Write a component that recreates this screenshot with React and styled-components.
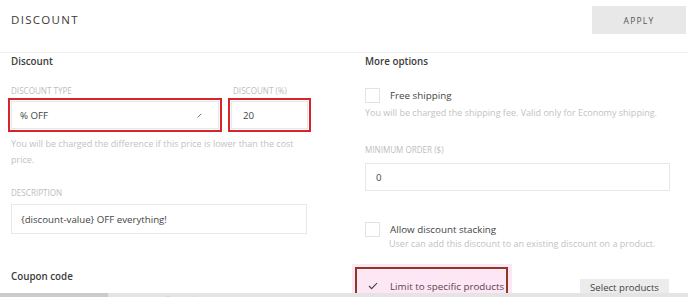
import styled, { createGlobalStyle } from "styled-components";

const Global = createGlobalStyle`
  html, body {
    margin: 0;
    padding: 0;
    background: #fff;
    font-family: "Open Sans", "Noto Sans", sans-serif;
    color: #333;
    overflow: hidden;
  }
`;

const Page = styled.div`
  width: 688px;
  height: 297px;
  overflow: hidden;
  position: relative;
`;

const Header = styled.div`
  display: flex;
  justify-content: space-between;
  align-items: flex-start;
  height: 53px;
  padding: 6px 2px 0 11px;
  box-sizing: border-box;
  border-bottom: 1px solid #f1f1f1;
`;

const Title = styled.h1`
  margin: 6px 0 0;
  font-size: 11.5px;
  font-weight: 400;
  letter-spacing: 1.3px;
  color: #3a3a3a;
  line-height: 16px;
`;

const ApplyButton = styled.button`
  width: 94px;
  height: 28px;
  border: none;
  background: #e8e8e8;
  font-family: inherit;
  font-size: 8.5px;
  letter-spacing: 1.2px;
  color: #555;
  padding: 0;
`;

const Body = styled.div`
  display: grid;
  grid-template-columns: 300px 305px;
  column-gap: 54px;
  padding-left: 11px;
`;

const Column = styled.div`
  display: flex;
  flex-direction: column;
`;

const SectionTitle = styled.h2`
  margin: ${(p) => p.$top || 0}px 0 0;
  font-size: 9.8px;
  font-weight: 600;
  line-height: 18px;
  color: #3c3c3c;
`;

const Label = styled.div`
  margin-top: ${(p) => p.$top || 0}px;
  padding-left: ${(p) => p.$indent || 0}px;
  font-size: 8.1px;
  line-height: 12px;
  color: #bdbdbd;
  text-transform: uppercase;
  white-space: nowrap;
`;

const FieldRow = styled.div`
  display: flex;
  gap: 6px;
  margin-left: -3px;
`;

const FieldGroup = styled.div`
  display: flex;
  flex-direction: column;
  width: ${(p) => p.$width}px;
`;

const Highlight = styled.div`
  border: 2px solid #d9232b;
  padding: 1px;
  margin-top: 1px;
`;

const Input = styled.div`
  display: flex;
  align-items: center;
  justify-content: space-between;
  height: ${(p) => p.$height || 28}px;
  width: ${(p) => (p.$width ? `${p.$width}px` : "auto")};
  margin-top: ${(p) => p.$top || 0}px;
  box-sizing: border-box;
  border: 1px solid #e8e8e8;
  padding: 0 16px 0 ${(p) => p.$pad || 8}px;
  font-size: 9.7px;
  color: #444;
`;

const Hint = styled.p`
  margin: ${(p) => p.$top || 0}px 0 0 ${(p) => p.$indent || 0}px;
  max-width: ${(p) => (p.$wide ? "none" : "300px")};
  white-space: ${(p) => (p.$wide ? "nowrap" : "normal")};
  font-size: 9px;
  line-height: 16px;
  color: #c2c2c2;
`;

const CheckRow = styled.div`
  display: flex;
  align-items: center;
  gap: 10px;
  margin-top: ${(p) => p.$top || 0}px;
  height: 18px;
`;

const Box = styled.span`
  width: 15px;
  height: 15px;
  flex: none;
  box-sizing: border-box;
  border: ${(p) => (p.$bare ? "none" : "1px solid #e3e3e3")};
  display: inline-flex;
  align-items: center;
  justify-content: center;
`;

const CheckText = styled.span`
  font-size: 9.8px;
  color: ${(p) => p.$color || "#444"};
  white-space: nowrap;
`;

const LimitRow = styled.div`
  display: flex;
  justify-content: space-between;
  align-items: flex-start;
  margin-top: 12px;
`;

const PinkGlow = styled.div`
  margin-left: -13px;
  padding: 3px 4px 0 3px;
  background: #fde7f5;
`;

const BrownBox = styled.div`
  display: flex;
  align-items: center;
  gap: 10px;
  width: 153px;
  height: 34px;
  box-sizing: border-box;
  border: 2px solid #8c3a24;
  border-bottom-color: #d9232b;
  padding: 4px 0 0 8px;
`;

const SelectButton = styled.button`
  margin-top: 15px;
  width: 89px;
  height: 24px;
  border: none;
  background: #ececec;
  font-family: inherit;
  font-size: 9.6px;
  color: #444;
  padding: 0 0 8px;
  margin-right: 1px;
`;

const Footer = styled.div`
  position: absolute;
  left: 0;
  right: 0;
  bottom: 0;
  height: 4px;
  display: flex;
  overflow: hidden;
`;

const Tab = styled.div`
  width: ${(p) => (p.$width ? `${p.$width}px` : "auto")};
  flex: ${(p) => (p.$width ? "none" : 1)};
  background: ${(p) => p.$bg};
  padding-left: ${(p) => p.$pad || 0}px;
  font-size: 10px;
  line-height: 14px;
  color: #d6d6d6;
`;

const Pencil = () => (
  <svg width="5" height="5" viewBox="0 0 5 5">
    <path d="M0.5 4.5 L4.2 0.8" stroke="#777" strokeWidth="1" />
  </svg>
);

const Check = () => (
  <svg width="10" height="8" viewBox="0 0 10 8">
    <path d="M1 4 L3.6 6.6 L9 1.2" stroke="#444" strokeWidth="1.1" fill="none" />
  </svg>
);

export default function App() {
  return (
    <Page>
      <Global />
      <Header>
        <Title>DISCOUNT</Title>
        <ApplyButton>APPLY</ApplyButton>
      </Header>
      <Body>
        <Column>
          <SectionTitle>Discount</SectionTitle>
          <FieldRow>
            <FieldGroup $width={214}>
              <Label $top={14} $indent={3}>Discount type</Label>
              <Highlight>
                <Input>
                  % OFF
                  <Pencil />
                </Input>
              </Highlight>
            </FieldGroup>
            <FieldGroup $width={83}>
              <Label $top={14} $indent={5}>Discount (%)</Label>
              <Highlight>
                <Input $pad={11}>20</Input>
              </Highlight>
            </FieldGroup>
          </FieldRow>
          <Hint $top={4}>
            You will be charged the difference if this price is lower than the cost price.
          </Hint>
          <Label $top={19}>Description</Label>
          <Input $top={5} $height={30} $width={296} $pad={9}>
            {"{discount-value} OFF everything!"}
          </Input>
          <SectionTitle $top={34}>Coupon code</SectionTitle>
        </Column>
        <Column>
          <SectionTitle>More options</SectionTitle>
          <CheckRow $top={15}>
            <Box />
            <CheckText>Free shipping</CheckText>
          </CheckRow>
          <Hint $top={1} $wide>
            You will be charged the shipping fee. Valid only for Economy shipping.
          </Hint>
          <Label $top={23}>Minimum order ($)</Label>
          <Input $top={7} $pad={10}>0</Input>
          <CheckRow $top={29}>
            <Box />
            <CheckText>Allow discount stacking</CheckText>
          </CheckRow>
          <Hint $top={-2} $indent={24} $wide>
            User can add this discount to an existing discount on a product.
          </Hint>
          <LimitRow>
            <PinkGlow>
              <BrownBox>
                <Box $bare>
                  <Check />
                </Box>
                <CheckText $color="#5a4452">Limit to specific products</CheckText>
              </BrownBox>
            </PinkGlow>
            <SelectButton>Select products</SelectButton>
          </LimitRow>
        </Column>
      </Body>
      <Footer>
        <Tab $width={108} $bg="#cbcbcb" />
        <Tab $bg="#e4e4e4" $pad={57}>Duration</Tab>
      </Footer>
    </Page>
  );
}
